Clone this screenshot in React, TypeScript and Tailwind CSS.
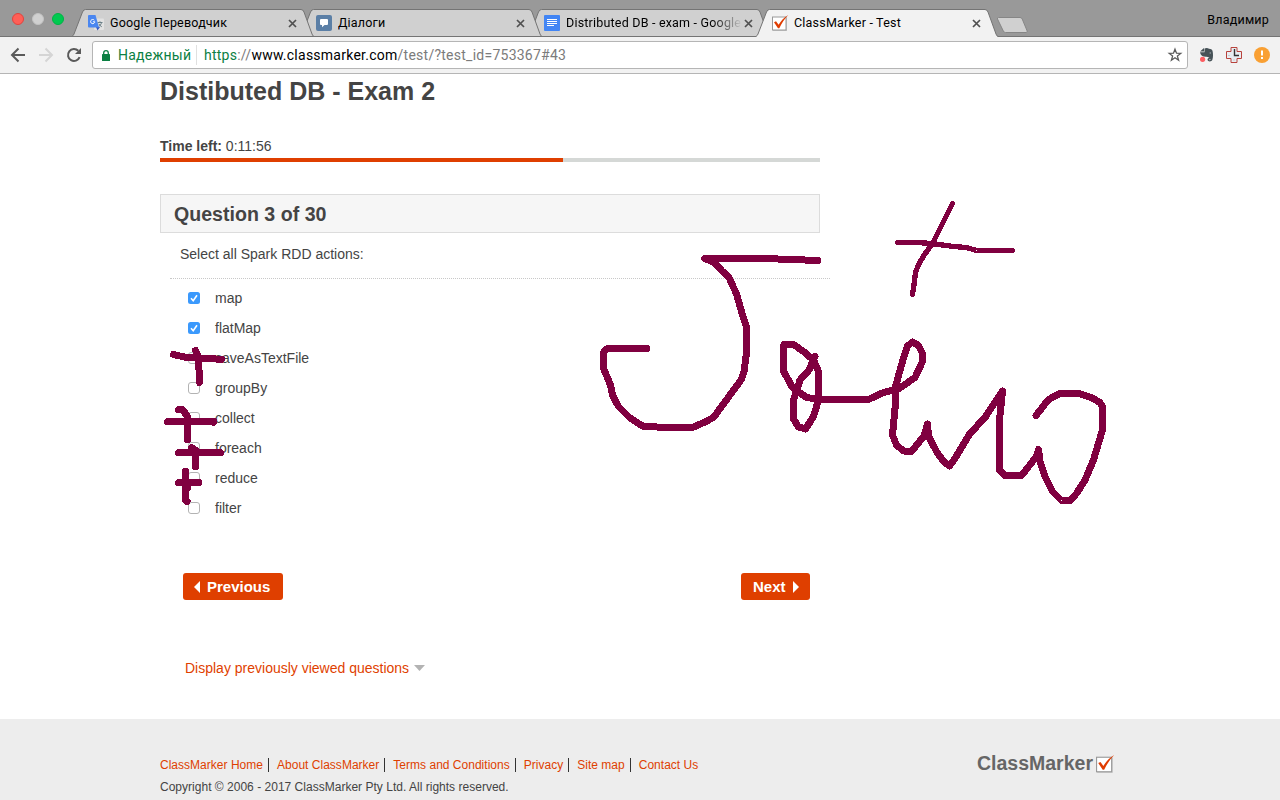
import React from "react";

const uiFont = "font-['Roboto',Inter,sans-serif]";

function CloseIcon() {
  return (
    <svg className="h-[9px] w-[9px] shrink-0" viewBox="0 0 9 9">
      <path d="M1 1l7 7M8 1L1 8" stroke="#505050" strokeWidth="1.7" fill="none" />
    </svg>
  );
}

function TranslateIcon() {
  return (
    <svg className="h-4 w-4 shrink-0" viewBox="0 0 16 16">
      <rect x="6" y="3.5" width="10" height="11.5" rx="1" fill="#e2e2e2" />
      <path d="M9.5 7.5h5M12 6.3v1.2M13.6 7.5c-.5 2-1.700 3.300-3 4.200M10.800 8.800c.6 1.300 1.700 2.300 3 3" stroke="#6b8088" strokeWidth="1" fill="none" />
      <path d="M8 12h4l-2.500 3.500z" fill="#3457c0" />
      <path d="M1 0h6.500L11 12.500H1a1 1 0 0 1-1-1V1a1 1 0 0 1 1-1z" fill="#4a86f0" />
      <path d="M6.300 5.200a2.100 2.100 0 1 0 .5 1.600H4.900" stroke="#fff" strokeWidth="1" fill="none" />
    </svg>
  );
}

function ChatIcon() {
  return (
    <svg className="h-4 w-4 shrink-0" viewBox="0 0 16 16">
      <rect width="16" height="16" rx="2" fill="#5b7fa6" />
      <path d="M5 4h6a1 1 0 0 1 1 1v4a1 1 0 0 1-1 1H8.500L6 12.200V10H5a1 1 0 0 1-1-1V5a1 1 0 0 1 1-1z" fill="#fff" />
    </svg>
  );
}

function DocsIcon() {
  return (
    <svg className="h-4 w-4 shrink-0" viewBox="0 0 16 16">
      <rect width="16" height="16" rx="1" fill="#4285f4" />
      <path d="M3 4.500h10M3 6.500h10M3 8.500h10M3 10.500h7" stroke="#fff" strokeWidth="1" />
    </svg>
  );
}

function MarkerIcon({ className }: { className: string }) {
  return (
    <svg className={className} viewBox="0 0 17 17">
      <rect x="1" y="2.500" width="14" height="13.500" fill="#c9c9c9" />
      <rect x=".5" y="2" width="13.500" height="13" fill="#fff" stroke="#999" />
      <path d="M2 7.200l2-1 2.600 3.600C9 5.700 12 2.500 16.300 0 12.500 4 9.500 8.500 7.300 13.300H6z" fill="#e03c00" />
    </svg>
  );
}

type TabProps = {
  icon: React.ReactNode;
  title: string;
  active?: boolean;
  textClass: string;
  layer: string;
};

function Tab({ icon, title, active, textClass, layer }: TabProps) {
  const fill = active ? "#f2f2f2" : "#d0d0d0";
  return (
    <div className={`relative -mr-3.5 h-7 w-[242px] shrink-0 ${layer}`}>
      <svg className="absolute inset-0 h-7 w-[242px]" viewBox="0 0 242 28">
        <path d="M0 27.500C1 27 1.500 26 2 25L10.500 3Q11.500.5 13.500.5H229Q231 .5 232 3L240 25Q241 27.500 242 27.500V28H0z" fill={fill} />
        <path d="M0 27.500C1 27 1.500 26 2 25L10.500 3Q11.500.5 13.500.5H229Q231 .5 232 3L240 25Q241 27.500 242 27.500" fill="none" stroke="#747474" />
        {!active && <path d="M0 27.500H242" stroke="#747474" />}
      </svg>
      <div className="relative flex h-7 items-center pl-4 pr-[17px]">
        {icon}
        <div className={`ml-1.5 min-w-0 flex-1 overflow-hidden whitespace-nowrap text-black ${textClass}`}>{title}</div>
        <CloseIcon />
      </div>
    </div>
  );
}

function TabStrip() {
  return (
    <div className="relative z-10 flex h-[37px] items-end justify-between bg-[#999] shadow-[inset_0_-1px_0_#747474]">
      <div className="flex items-end">
        <div className="mb-3 ml-3 flex w-[60px] gap-2">
          <span className="h-3 w-3 rounded-full border border-[#e0443e] bg-[#ff5f57]" />
          <span className="h-3 w-3 rounded-full border border-[#c2c2c2] bg-[#d0d0d0]" />
          <span className="h-3 w-3 rounded-full border border-[#00b345] bg-[#00c950]" />
        </div>
        <Tab icon={<TranslateIcon />} title="Google Переводчик" layer="z-30" textClass="text-[12.5px] tracking-[0.2px]" />
        <Tab icon={<ChatIcon />} title="Діалоги" layer="z-20" textClass="text-[12.5px] tracking-[0.2px]" />
        <Tab
          icon={<DocsIcon />}
          title="Distributed DB - exam - Google"
          layer="z-10"
          textClass="text-[12.5px] tracking-[0.2px] [mask-image:linear-gradient(to_right,#000_82%,transparent_99%)]"
        />
        <Tab icon={<MarkerIcon className="h-[17px] w-[17px] shrink-0" />} title="ClassMarker - Test" active layer="z-40" textClass="text-[12.5px] tracking-[0.2px] relative -left-px" />
        <svg className="mb-1 ml-3 h-[17px] w-[34px]" viewBox="0 0 34 17">
          <path d="M2.500 1.500H24q1.500 0 2.200 1.500l5 12q.5 1.500-1 1.500H9.500Q8 16.500 7.300 15L1.500 3Q1 1.500 2.500 1.500z" fill="#d0d0d0" stroke="#868686" />
        </svg>
      </div>
      <div className="mr-[11px] flex h-7 items-center pb-1.5 text-[12.5px] tracking-[0.2px] text-black">Владимир</div>
    </div>
  );
}

function Toolbar() {
  return (
    <div className="flex h-[37px] items-center border-b border-[#b5b5b5] bg-[#f2f2f2] pl-[10px]">
      <svg className="h-4 w-[17px]" viewBox="0 0 17 16">
        <path d="M15 8H2.500M8.500 1.500L2 8l6.500 6.500" fill="none" stroke="#5a5a5a" strokeWidth="2" />
      </svg>
      <svg className="ml-[11px] h-4 w-[17px]" viewBox="0 0 17 16">
        <path d="M1 8h12.500M7.500 1.500L14 8l-6.500 6.500" fill="none" stroke="#d5d5d5" strokeWidth="2" />
      </svg>
      <svg className="ml-[11px] h-4 w-4" viewBox="0 0 16 16">
        <path d="M13.600 10.200A6 6 0 1 1 12.300 3.800" fill="none" stroke="#5a5a5a" strokeWidth="2" />
        <path d="M15 1v6H9z" fill="#5a5a5a" />
      </svg>
      <div className="ml-[10px] flex h-7 w-[1096px] items-center rounded-[3px] border border-[#b5b5b5] bg-white pl-[9px] pr-1">
        <svg className="h-[11px] w-2" viewBox="0 0 8 11">
          <rect y="4" width="8" height="7" rx=".6" fill="#0b8043" />
          <path d="M1.700 4.500V3a2.300 2.300 0 0 1 4.600 0v1.500" fill="none" stroke="#0b8043" strokeWidth="1.300" />
        </svg>
        <div className="ml-2 w-[71px] whitespace-nowrap text-[14px] tracking-[0.25px] text-[#0b8043]">Надежный</div>
        <div className="ml-[7px] h-5 w-px bg-[#e0e0e0]" />
        <div className="ml-[7px] flex-1 whitespace-nowrap text-[14px] tracking-[0.25px] text-[#7b7b7b]">
          <span className="text-[#0b8043]">https</span>://<span className="text-black">www.classmarker.com</span>/test/?test_id=753367#43
        </div>
        <svg className="h-4 w-4" viewBox="0 0 16 16">
          <path d="M8 2.200l1.500 4 4.300.2-3.400 2.700 1.200 4.100L8 10.800l-3.600 2.400 1.200-4.100L2.200 6.400l4.300-.2z" fill="none" stroke="#5a5a5a" strokeWidth="1.300" />
        </svg>
      </div>
      <svg className="ml-3 h-4 w-[14px]" viewBox="0 0 14 16">
        <path d="M0 4.500L4 1v3.500zM4.500 1.500C6 .5 8 .8 9 1.700c2 .2 3 .7 3.500 2 .7 3 .8 6.500-.2 9.300-.6 1.800-4.500 2-4.800-.2-.1-1.600 1.500-2 2.500-1.500.3 1-.8 1-.7 1.700.5.5 1 .1 1.200-.6-.8-1.700-2.300-2.400-4-2.600C3 10 .5 8.500 0 5.300h4.500z" fill="#465257" />
        <circle cx="10.300" cy="6" r=".8" fill="#9ba4a8" />
        <circle cx="2.600" cy="12.300" r="2.600" fill="#fc5e62" />
      </svg>
      <svg className="ml-[12px] h-4 w-4" viewBox="0 0 16 16">
        <path d="M5 .5h6v4h4.500v7H11v4H5v-4H.5v-7H5z" fill="#e8edf2" stroke="#b8433c" />
        <path d="M8.500 2v6.500h4.500" fill="none" stroke="#333" strokeWidth="1.400" />
        <path d="M2 8.500h2M8 12v2" stroke="#ccc" />
      </svg>
      <svg className="ml-3 h-4 w-4" viewBox="0 0 16 16">
        <circle cx="8" cy="8" r="8" fill="#f9a033" />
        <path d="M7 3.500h2v5H7zM7 10h2v2H7z" fill="#fff" />
      </svg>
    </div>
  );
}

const answers = [
  { label: "map", checked: true },
  { label: "flatMap", checked: true },
  { label: "saveAsTextFile", checked: false },
  { label: "groupBy", checked: false },
  { label: "collect", checked: false },
  { label: "foreach", checked: false },
  { label: "reduce", checked: false },
  { label: "filter", checked: false },
];

function CheckBox({ checked }: { checked: boolean }) {
  return (
    <svg className="h-3 w-3" viewBox="0 0 12 12">
      {checked ? (
        <>
          <rect width="12" height="12" rx="2.500" fill="#3b99fc" />
          <path d="M3 6.300l2.200 2.400L9 3.200" fill="none" stroke="#fff" strokeWidth="1.600" />
        </>
      ) : (
        <rect x=".5" y=".5" width="11" height="11" rx="2.500" fill="#fff" stroke="#b3b3b3" />
      )}
    </svg>
  );
}

function Annotations() {
  return (
    <svg className="pointer-events-none absolute inset-0 z-50 h-[800px] w-[1280px]" viewBox="0 0 1280 800" shapeRendering="crispEdges">
      <g fill="none" stroke="#800040" strokeWidth="7" strokeLinecap="round" strokeLinejoin="round">
        <path d="M818 260.300L783 259.500 773 258.500H704.500L712 261.500 717 265 721.500 270.500 729 277.500 736.500 294 741.500 311.500 746.500 327V353L744 371.500 741 380 728.500 397 713.500 417.500 705 422 693.500 427H656.500L642.500 426 630 418 618.500 406.500 612.500 395 610.500 385 603.500 368.500V353Q604.500 348.500 610 348.500H647" />
        <path d="M815 356.500L809 370 800 380 796.500 391.500 793.500 400V419L798.500 427 805.500 429 813.500 416.500 818.500 400V371.500L813.500 360 803.500 351.500 793.500 344.500H784L783.500 371 792.500 387.500 806.500 397.500 820 399.500H868.500L883.500 392.500 898.500 389 915 377.500 922.500 361.500V353.500L918.500 345.500 912.500 342 907.500 346 902.500 361.500 895.500 386.500V403.500L892.500 435 896.500 445 903.500 451 911.500 451.500 924 436 927.500 424 928.500 436 936.500 451.500 943.500 461.500 949.500 466 955 458.500 970 433.500 985 417.500 1002.500 391 999.500 420V470L1005 475.500H1021.500L1036.500 456.500 1038.500 449.500 1040 461.500 1045 476.500 1052.500 491.500 1061.500 500.500H1070L1076.500 493.500 1085 480 1093.500 460 1102.500 430V406.500L1100 402.500 1091.500 397.500 1078.500 393.500H1060L1048.500 399.500 1036 415.500" />
        <path d="M173.500 354.500L186.500 357.500 221.500 359.300M195.500 350.500L198.500 356.500 199.500 382.500" />
        <path d="M167.500 421.500H214L213.500 422.500M178.500 409.500H182.500L187.500 416.500V440" />
        <path d="M178.500 452.500H220.500M191.500 447.500L195.500 450V466.500" />
        <path d="M178.500 482.500H199M185.500 471V500.500L187 501.500M185.500 488H187.500" />
        <path strokeWidth="5.300" d="M897.500 242.500H916.500L931.500 243.500 953.500 246.500 966.500 247.500 976.500 250.500H1012.500M952.500 203.500L932.500 243.500 923.500 256 919.500 263 915.500 272 914 285 912.500 294.500" />
      </g>
    </svg>
  );
}

const links = ["ClassMarker Home", "About ClassMarker", "Terms and Conditions", "Privacy", "Site map", "Contact Us"];

function Footer() {
  return (
    <footer className="flex h-[81px] bg-[#ededed] pl-[160px] text-[12px]">
      <div className="w-[817px] shrink-0 pt-[37px]">
        <nav className="flex h-[18px] items-center whitespace-nowrap tracking-[0.018px]">
          {links.map((link, i) => (
            <a key={link} className={`leading-[14px] text-[#df3f00] ${i < links.length - 1 ? "mr-2 border-r border-[#333] pr-[5px]" : ""}`}>
              {link}
            </a>
          ))}
        </nav>
        <p className="mt-1 leading-[18px] tracking-[0.015px] text-[#444]">Copyright © 2006 - 2017 ClassMarker Pty Ltd. All rights reserved.</p>
      </div>
      <div className="mt-[35px] flex h-5 items-center">
        <span className="w-[117px] whitespace-nowrap text-[19.5px] font-bold text-[#666]">ClassMarker</span>
        <MarkerIcon className="ml-0.5 h-[19px] w-[19px]" />
      </div>
    </footer>
  );
}

export default function App() {
  return (
    <div className="relative flex h-[800px] w-[1280px] flex-col overflow-hidden bg-white">
      <header className={uiFont}>
        <TabStrip />
        <Toolbar />
      </header>
      <div className="flex flex-1 flex-col font-['Liberation_Sans',Arial,sans-serif] text-[14px] text-[#444]">
        <main className="flex-1 pl-[160px]">
          <div className="w-[660px]">
            <h1 className="pt-px text-[25px] font-bold leading-8">Distibuted DB - Exam 2</h1>
            <div className="mt-[30px] leading-[18px]">
              <b>Time left:</b> 0:11:56
            </div>
            <div className="mt-[3px] h-1 bg-[#d5d8d6]">
              <div className="h-1 w-[403px] bg-[#df3f00]" />
            </div>
            <h2 className="mt-8 flex h-[39px] items-center border border-[#dcdcdc] bg-[#f6f6f6] pl-[13px] pt-0.5 text-[19.600px] font-bold">Question 3 of 30</h2>
            <p className="mt-3 pl-5 leading-[18px]">Select all Spark RDD actions:</p>
            <div className="ml-2.5 mt-[15px] w-[660px] border-t border-dotted border-[#c8c8c8]" />
            <ul className="mt-1 pl-7">
              {answers.map((answer) => (
                <li key={answer.label} className="flex h-[30px] items-center gap-[15px]">
                  <CheckBox checked={answer.checked} />
                  <span>{answer.label}</span>
                </li>
              ))}
            </ul>
            <div className="mt-[50px] flex justify-between pl-[23px] pr-[10px] text-[15px] font-bold text-white">
              <button className="flex h-[27px] w-[100px] items-center rounded-[3px] bg-[#df3f00] pl-[11px]">
                <svg className="mr-[7px] h-3 w-1.5" viewBox="0 0 6 12">
                  <path d="M6 0v12L0 6z" fill="#fff" />
                </svg>
                <span className="pt-0.5">Previous</span>
              </button>
              <button className="flex h-[27px] w-[69px] items-center rounded-[3px] bg-[#df3f00] pl-3">
                <span className="pt-0.5">Next</span>
                <svg className="ml-[7px] h-3 w-1.5" viewBox="0 0 6 12">
                  <path d="M0 0v12l6-6z" fill="#fff" />
                </svg>
              </button>
            </div>
            <div className="mt-[59px] flex items-center pl-[25px] leading-[18px] text-[#df3f00]">
              Display previously viewed questions
              <svg className="ml-[5px] h-1.5 w-[11px]" viewBox="0 0 11 6">
                <path d="M0 0h11L5.500 6z" fill="#b3b3b3" />
              </svg>
            </div>
          </div>
        </main>
        <Footer />
      </div>
      <Annotations />
    </div>
  );
}
